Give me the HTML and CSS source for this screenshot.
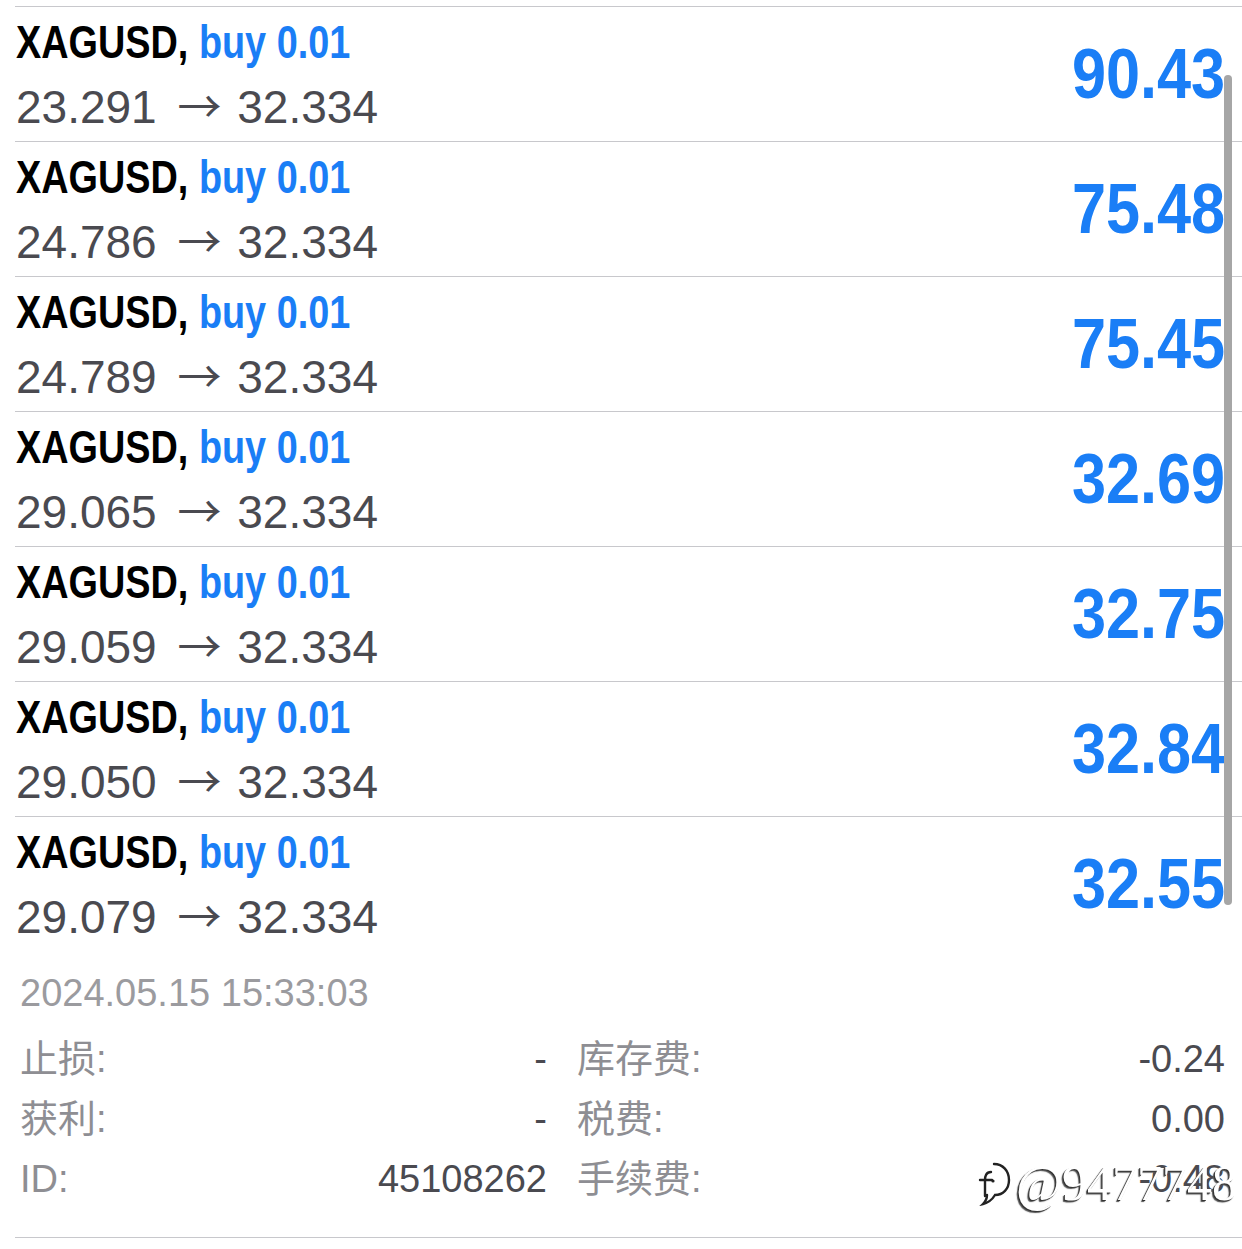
FILE: index.html
```html
<!DOCTYPE html>
<html lang="zh">
<head>
    <meta charset="UTF-8">
    <meta name="viewport" content="width=device-width, initial-scale=1.0">
    <title>XAGUSD positions</title>
    <link rel="stylesheet" href="styles.css">
</head>
<body>
<div class="page">

    <div class="deals">
        <div class="deal">
            <div class="deal-info">
                <div class="deal-title">XAGUSD, <span class="side">buy 0.01</span></div>
                <div class="deal-price">23.291 <span class="arrow">→</span> 32.334</div>
            </div>
            <div class="deal-profit">90.43</div>
        </div>
        <div class="deal">
            <div class="deal-info">
                <div class="deal-title">XAGUSD, <span class="side">buy 0.01</span></div>
                <div class="deal-price">24.786 <span class="arrow">→</span> 32.334</div>
            </div>
            <div class="deal-profit">75.48</div>
        </div>
        <div class="deal">
            <div class="deal-info">
                <div class="deal-title">XAGUSD, <span class="side">buy 0.01</span></div>
                <div class="deal-price">24.789 <span class="arrow">→</span> 32.334</div>
            </div>
            <div class="deal-profit">75.45</div>
        </div>
        <div class="deal">
            <div class="deal-info">
                <div class="deal-title">XAGUSD, <span class="side">buy 0.01</span></div>
                <div class="deal-price">29.065 <span class="arrow">→</span> 32.334</div>
            </div>
            <div class="deal-profit">32.69</div>
        </div>
        <div class="deal">
            <div class="deal-info">
                <div class="deal-title">XAGUSD, <span class="side">buy 0.01</span></div>
                <div class="deal-price">29.059 <span class="arrow">→</span> 32.334</div>
            </div>
            <div class="deal-profit">32.75</div>
        </div>
        <div class="deal">
            <div class="deal-info">
                <div class="deal-title">XAGUSD, <span class="side">buy 0.01</span></div>
                <div class="deal-price">29.050 <span class="arrow">→</span> 32.334</div>
            </div>
            <div class="deal-profit">32.84</div>
        </div>
        <div class="deal">
            <div class="deal-info">
                <div class="deal-title">XAGUSD, <span class="side">buy 0.01</span></div>
                <div class="deal-price">29.079 <span class="arrow">→</span> 32.334</div>
            </div>
            <div class="deal-profit">32.55</div>
        </div>

        <div class="scrollbar"></div>
    </div>

    <div class="details">
        <div class="date">2024.05.15 15:33:03</div>
        <div class="detail-grid">
            <div class="cell"><span class="label">止损:</span><span class="value">-</span></div>
            <div class="cell"><span class="label">库存费:</span><span class="value">-0.24</span></div>
            <div class="cell"><span class="label">获利:</span><span class="value">-</span></div>
            <div class="cell"><span class="label">税费:</span><span class="value">0.00</span></div>
            <div class="cell"><span class="label">ID:</span><span class="value">45108262</span></div>
            <div class="cell fee"><span class="label">手续费:</span><span class="value">-0.48</span>
                <div class="watermark">
                    <svg class="wm-logo" width="40" height="46" viewBox="0 0 40 46">
                        <path d="M22 4c9 0 15 7 15 16s-6 15-14 15c-3 5-8 8-12 9 3-3 4-6 4-9" fill="none" stroke="#222" stroke-width="2.4" stroke-linecap="round"/>
                        <path d="M19 12c-5 0-6 4-6 8v16M8 20h12" fill="none" stroke="#222" stroke-width="2.4" stroke-linecap="round"/>
                        <circle cx="21" cy="21" r="1.6" fill="#222"/>
                    </svg>
                    <span class="wm-text">@9477748</span>
                </div>
            </div>
        </div>
    </div>

</div>
</body>
</html>
```

FILE: styles.css
```css
html, body {
    margin: 0;
    background: #ffffff;
    font-family: "Liberation Sans", Arial, sans-serif;
}

.page {
    width: 1242px;
    padding-top: 6px;
}

.deals {
    position: relative;
}

.deal {
    display: flex;
    align-items: center;
    justify-content: space-between;
    height: 134px;
    margin-left: 15px;
    padding: 0 17px 0 1px;
    border-top: 1px solid #c8c8cc;
}

.deal-info {
    display: flex;
    flex-direction: column;
}

/* iOS uses a condensed bold here, squeeze Liberation Sans to match */
.deal-title {
    font-weight: bold;
    font-size: 47px;
    line-height: 62px;
    color: #000000;
    white-space: nowrap;
    transform: scaleX(0.805);
    transform-origin: left center;
}

.side {
    color: #1a7ef6;
}

.deal-price {
    font-size: 46px;
    line-height: 62px;
    color: #4a4a50;
    white-space: nowrap;
}

.arrow {
    font-family: "Noto Sans CJK SC", sans-serif;
    font-size: 44px;
    margin: 0 3px 0 8px;
}

.deal-profit {
    font-weight: bold;
    font-size: 70px;
    color: #1a7ef6;
    transform: scaleX(0.875);
    transform-origin: right center;
}

.scrollbar {
    position: absolute;
    right: 10px;
    top: 69px;
    width: 8px;
    height: 830px;
    border-radius: 4px;
    background: #a6a6a6;
}

.details {
    padding: 20px 17px 0 20px;
    border-bottom: 1px solid #c8c8cc;
    margin-left: 15px;
}

.date {
    font-size: 38px;
    line-height: 44px;
    color: #9b9b9f;
    margin-left: -15px;
}

.detail-grid {
    display: grid;
    grid-template-columns: 527px 648px;
    column-gap: 30px;
    margin-left: -15px;
    padding: 14px 0 28px;
}

.cell {
    position: relative;
    display: flex;
    justify-content: space-between;
    align-items: baseline;
    height: 60px;
    font-size: 38px;
    line-height: 60px;
}

.label {
    font-family: "Liberation Sans", "Noto Sans CJK SC", sans-serif;
    color: #8e8e93;
}

.value {
    color: #4a4a50;
}

.watermark {
    position: absolute;
    right: -12px;
    top: 4px;
    display: flex;
    align-items: center;
    gap: 4px;
}

.wm-text {
    font-family: "Liberation Serif", serif;
    font-size: 50px;
    color: #ffffff;
    text-shadow: -1px 1px 0 #333, -2px 2px 1px #555;
}
```
